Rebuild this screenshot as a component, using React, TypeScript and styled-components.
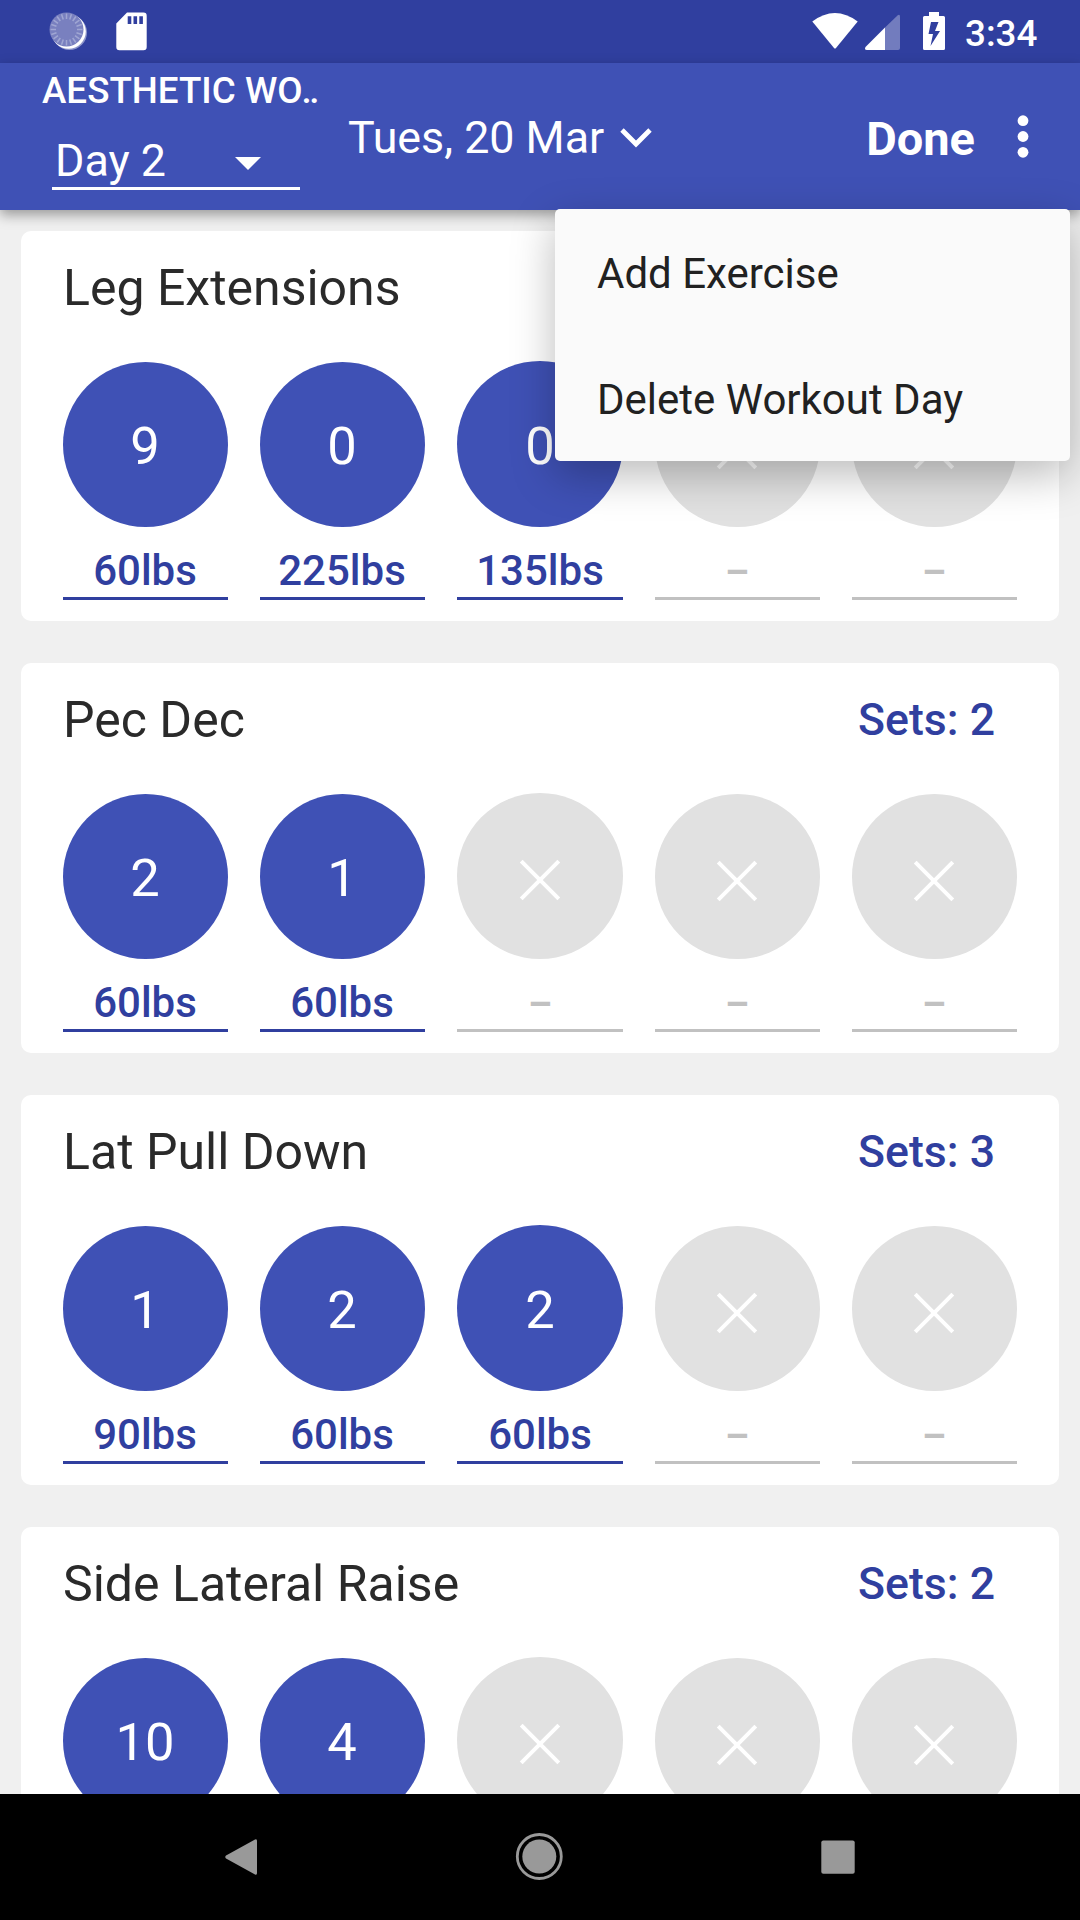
import React from "react";
import styled, { createGlobalStyle } from "styled-components";

const colors = {
  primary: "#3f51b5",
  primaryDark: "#303f9f",
  background: "#f0f0f0",
  empty: "#e1e1e1",
  emptyText: "#c1c1c1",
  navIcon: "#999999",
};

const GlobalStyle = createGlobalStyle`
  * { box-sizing: border-box; }
  body {
    margin: 0;
    background: #000;
    font-family: Roboto, "Noto Sans", sans-serif;
  }
`;

const Screen = styled.div`
  display: flex;
  flex-direction: column;
  width: 1080px;
  height: 1920px;
  overflow: hidden;
  background: ${colors.background};
`;

const StatusBar = styled.header`
  display: flex;
  flex: none;
  justify-content: space-between;
  height: 63px;
  background: ${colors.primaryDark};
`;

const StatusGroup = styled.div`
  display: flex;
  align-items: flex-start;
`;

const StatusIcon = styled.svg<{ $left: number }>`
  display: block;
  flex: none;
  margin-left: ${(p) => p.$left}px;
`;

const Clock = styled.span`
  width: 74px;
  margin: 12px 41px 0 19px;
  color: #fff;
  font-size: 36.75px;
  font-weight: 500;
  line-height: 43px;
  white-space: nowrap;
`;

const AppBar = styled.div`
  position: relative;
  z-index: 1;
  display: flex;
  flex: none;
  height: 147px;
  background: ${colors.primary};
  color: #fff;
  box-shadow: 0 5px 12px rgba(0, 0, 0, 0.36);
`;

const PlanColumn = styled.div`
  display: flex;
  flex-direction: column;
  width: 348px;
  padding-left: 42px;
`;

const PlanName = styled.div`
  margin-top: 6px;
  font-size: 36.75px;
  font-weight: 500;
  line-height: 43px;
  white-space: nowrap;
`;

const Truncation = styled.span`
  margin-left: -1px;
  letter-spacing: -2.5px;
`;

const DaySpinner = styled.div`
  display: flex;
  justify-content: space-between;
  width: 248px;
  height: 62px;
  margin: 16px 0 0 10px;
  padding: 7px 39px 0 3px;
  border-bottom: 3px solid #fff;
  font-size: 44.8px;
  line-height: 52px;
`;

const SpinnerArrow = styled.svg`
  margin-top: 22px;
`;

const DateButton = styled.div`
  display: flex;
  align-items: flex-start;
  flex: 1;
  padding-top: 49px;
  font-size: 44.8px;
  line-height: 52px;
  white-space: nowrap;
`;

const DateChevron = styled.svg`
  margin: 15px 0 0 16px;
`;

const DoneButton = styled.div`
  padding: 48px 42px 0 0;
  font-size: 47px;
  font-weight: 700;
  line-height: 55px;
`;

const OverflowButton = styled.svg`
  flex: none;
  margin: 51px 51px 0 0;
`;

const Menu = styled.div`
  position: absolute;
  z-index: 2;
  top: 146px;
  right: 10px;
  width: 515px;
  border-radius: 5px;
  background: #fafafa;
  box-shadow: 0 14px 44px rgba(0, 0, 0, 0.27);
`;

const MenuItem = styled.div`
  height: 126px;
  padding-left: 42px;
  color: #212121;
  font-size: 42px;
  line-height: 130px;
  white-space: nowrap;
`;

const WorkoutList = styled.main`
  display: flex;
  flex: 1;
  flex-direction: column;
  gap: 42px;
  min-height: 0;
  padding: 21px 21px 0;
  overflow: hidden;
`;

const Card = styled.section`
  flex: none;
  height: 390px;
  padding: 0 42px;
  border-radius: 10px;
  background: #fff;
`;

const CardHeader = styled.div`
  display: flex;
  align-items: flex-start;
  justify-content: space-between;
  height: 130px;
  padding-right: 22px;
`;

const ExerciseName = styled.h2`
  margin: 28px 0 0;
  color: #2a2a2a;
  font-size: 50px;
  font-weight: 400;
  line-height: 59px;
`;

const SetsLabel = styled.span`
  margin-top: 31px;
  color: ${colors.primaryDark};
  font-size: 44.6px;
  font-weight: 500;
  line-height: 52px;
`;

const SetGrid = styled.div`
  display: grid;
  grid-template-columns: 165px 165px 166px 165px 165px;
  column-gap: 32px;
`;

const SetColumn = styled.div`
  display: flex;
  flex-direction: column;
  align-items: stretch;
`;

const Reps = styled.div<{ $empty: boolean; $wide: boolean }>`
  display: flex;
  align-items: center;
  justify-content: center;
  height: ${(p) => (p.$wide ? 166 : 165)}px;
  margin-top: ${(p) => (p.$wide ? 0 : 1)}px;
  padding: ${(p) => (p.$empty ? (p.$wide ? "7px 2px 0 0" : "8px 2px 0 0") : "3px 1px 0 0")};
  padding-right: ${(p) => (p.$wide ? 0 : p.$empty ? 2 : 1)}px;
  border-radius: 50%;
  background: ${(p) => (p.$empty ? colors.empty : colors.primary)};
  color: #fff;
  font-size: 52.5px;
  line-height: 62px;
`;

const Weight = styled.div<{ $empty: boolean; $wide: boolean }>`
  height: 73px;
  padding: 19px ${(p) => (p.$wide ? 0 : 1)}px 0 0;
  border-bottom: 3px solid ${(p) => (p.$empty ? colors.emptyText : colors.primaryDark)};
  color: ${(p) => (p.$empty ? colors.emptyText : colors.primaryDark)};
  font-size: 42px;
  font-weight: 500;
  line-height: 49px;
  text-align: center;
`;

const NoWeight = styled.span`
  font-size: 38px;
  font-weight: 700;
`;

const NavBar = styled.nav`
  display: flex;
  flex: none;
  align-items: center;
  height: 126px;
  background: #000;
`;

const NavButton = styled.svg<{ $left: number }>`
  margin-left: ${(p) => p.$left}px;
  fill: ${colors.navIcon};
`;

type SetEntry = { reps: number; weight?: string };
type Exercise = { name: string; sets: SetEntry[]; weighted: boolean };

const exercises: Exercise[] = [
  {
    name: "Leg Extensions",
    weighted: true,
    sets: [
      { reps: 9, weight: "60lbs" },
      { reps: 0, weight: "225lbs" },
      { reps: 0, weight: "135lbs" },
    ],
  },
  {
    name: "Pec Dec",
    weighted: true,
    sets: [
      { reps: 2, weight: "60lbs" },
      { reps: 1, weight: "60lbs" },
    ],
  },
  {
    name: "Lat Pull Down",
    weighted: true,
    sets: [
      { reps: 1, weight: "90lbs" },
      { reps: 2, weight: "60lbs" },
      { reps: 2, weight: "60lbs" },
    ],
  },
  {
    name: "Side Lateral Raise",
    weighted: false,
    sets: [{ reps: 10 }, { reps: 4 }],
  },
];

const SLOTS = [0, 1, 2, 3, 4];

function Cross() {
  return (
    <svg width="42" height="42" viewBox="0 0 42 42">
      <path d="M2.2 2.2L39.8 39.8M39.8 2.2L2.2 39.8" stroke="#fff" strokeWidth="4" />
    </svg>
  );
}

function ExerciseCard({ exercise }: { exercise: Exercise }) {
  return (
    <Card>
      <CardHeader>
        <ExerciseName>{exercise.name}</ExerciseName>
        <SetsLabel>Sets: {exercise.sets.length}</SetsLabel>
      </CardHeader>
      <SetGrid>
        {SLOTS.map((i) => {
          const set = exercise.sets[i];
          const wide = i === 2;
          return (
            <SetColumn key={i}>
              <Reps $empty={!set} $wide={wide}>
                {set ? set.reps : <Cross />}
              </Reps>
              {exercise.weighted && (
                <Weight $empty={!set} $wide={wide}>
                  {set ? set.weight : <NoWeight>–</NoWeight>}
                </Weight>
              )}
            </SetColumn>
          );
        })}
      </SetGrid>
    </Card>
  );
}

function SyncIcon() {
  const ticks = Array.from({ length: 20 }, (_, i) => i * 18);
  return (
    <StatusIcon $left={48} width="42" height="63">
      <circle cx="21.5" cy="32.5" r="17.5" fill="#fff" fillOpacity="0.45" />
      <circle cx="20.5" cy="31.5" r="17.3" fill="#fff" />
      <circle cx="18.5" cy="29.5" r="17" fill="#7980bf" />
      {ticks.map((a) => (
        <path
          key={a}
          d="M18.5 13.5V19"
          stroke="#a0a6d3"
          strokeWidth="1.5"
          transform={`rotate(${a} 18.5 29.5)`}
        />
      ))}
    </StatusIcon>
  );
}

export default function App() {
  return (
    <>
      <GlobalStyle />
      <Screen>
        <StatusBar>
          <StatusGroup>
            <SyncIcon />
            <StatusIcon $left={25} width="34" height="63">
              <path
                fillRule="evenodd"
                fill="#fff"
                d="M12 12.5H28.5Q31.7 12.5 31.7 15.7V47Q31.7 50.2 28.5 50.2H4.5Q1.3 50.2 1.3 47V23.5ZM12.7 16.3V24H16.3V16.3ZM18.5 16.3V24H22.1V16.3ZM24.3 16.3V24H27.9V16.3Z"
              />
            </StatusIcon>
          </StatusGroup>
          <StatusGroup>
            <StatusIcon $left={0} width="48" height="63">
              <path fill="#fff" d="M1.3 21.5Q23.9 4.5 46.7 21.5L25 48Q24 49.2 23 48Z" />
            </StatusIcon>
            <StatusIcon $left={6} width="38" height="63">
              <path
                fill="#fff"
                fillOpacity="0.32"
                d="M20 27.5L32.5 15.5Q35 13.5 35 17V48Q35 50 33 50H20Z"
              />
              <path fill="#fff" d="M20 27.5V50H2Q-1 50 0.5 47Z" />
            </StatusIcon>
            <StatusIcon $left={19} width="24" height="63">
              <path
                fillRule="evenodd"
                fill="#fff"
                d="M7 12H17V16H21.5Q23 16 23 17.5V48.5Q23 50 21.5 50H2.5Q1 50 1 48.5V17.5Q1 16 2.5 16H7ZM9 22L6.5 34H11L8.5 46L18 31H13L16.5 22Z"
              />
            </StatusIcon>
            <Clock>3:34</Clock>
          </StatusGroup>
        </StatusBar>

        <AppBar>
          <PlanColumn>
            <PlanName>
              AESTHETIC WO<Truncation>..</Truncation>
            </PlanName>
            <DaySpinner>
              Day 2
              <SpinnerArrow width="26" height="13">
                <path d="M0 0H26L13 13Z" fill="#fff" />
              </SpinnerArrow>
            </DaySpinner>
          </PlanColumn>
          <DateButton>
            Tues, 20 Mar
            <DateChevron width="32" height="22">
              <path d="M2 3L16 17L30 3" fill="none" stroke="#fff" strokeWidth="4.8" />
            </DateChevron>
          </DateButton>
          <DoneButton>Done</DoneButton>
          <OverflowButton width="12" height="46">
            <circle cx="6" cy="6.7" r="5.4" fill="#fff" />
            <circle cx="6" cy="22.5" r="5.4" fill="#fff" />
            <circle cx="6" cy="38.3" r="5.4" fill="#fff" />
          </OverflowButton>
          <Menu>
            <MenuItem>Add Exercise</MenuItem>
            <MenuItem>Delete Workout Day</MenuItem>
          </Menu>
        </AppBar>

        <WorkoutList>
          {exercises.map((exercise) => (
            <ExerciseCard key={exercise.name} exercise={exercise} />
          ))}
        </WorkoutList>

        <NavBar>
          <NavButton $left={224} width="34" height="38">
            <path d="M31 1.5Q33 0.5 33 3V35Q33 37.5 31 36.5L2 20.5Q0.5 19 2 17.5Z" />
          </NavButton>
          <NavButton $left={257} width="48" height="48">
            <circle cx="24.3" cy="23.5" r="17" />
            <circle cx="24.3" cy="23.5" r="22" fill="none" stroke={colors.navIcon} strokeWidth="2.8" />
          </NavButton>
          <NavButton $left={258} width="34" height="34">
            <rect x="0.3" y="0.5" width="33.4" height="33.2" rx="2" />
          </NavButton>
        </NavBar>
      </Screen>
    </>
  );
}
